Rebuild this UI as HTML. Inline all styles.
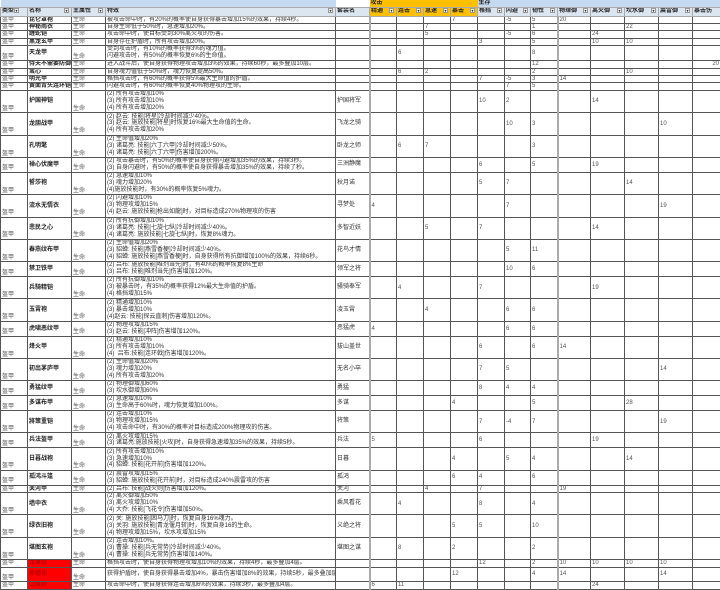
<!DOCTYPE html>
<html><head><meta charset="utf-8"><style>
*{margin:0;padding:0;box-sizing:border-box}
body{width:720px;height:590px;overflow:hidden;background:#fff;font-family:"Liberation Sans","Noto Sans CJK SC",sans-serif;font-size:6px;color:#333}
table{border-collapse:collapse;table-layout:fixed;width:720px;position:absolute;left:0;top:0}
td{border:1px solid #555;padding:0 1px;line-height:6.4px;white-space:nowrap;overflow:hidden;vertical-align:middle}
tr.h0 td{height:7px;line-height:6px;border:none;font-weight:bold;color:#222;font-size:6px}
tr.h1 td{height:9px;line-height:7px;font-weight:bold;color:#222;font-size:6px;background:#dce6f1;border-color:#aaa}
.bl{background:#c5d9f1!important}.or{background:#ffc000!important}
.dd{display:inline-block;width:5px;height:5px;border:1px solid #999;background:#fff;font-size:4px;line-height:3px;text-align:center;vertical-align:middle;margin-right:1px;color:#333}
.r1 td{height:7.45px;line-height:6.4px}.r2 td{height:14.9px}.r3 td{height:22.35px}
.r2 td.e,.r3 td.e{line-height:6.9px}
td.t,td.m{vertical-align:bottom;color:#555}
td.n{font-weight:bold;color:#222}
td.e{vertical-align:middle;color:#333}
td.red{background:#f00;color:#b00}
td.s{vertical-align:middle;color:#555}
td.g{border-left:2px solid #aaa}
</style></head><body>
<table>
<colgroup><col style="width:27px"><col style="width:44px"><col style="width:34px"><col style="width:230px"><col style="width:34px"><col style="width:27px"><col style="width:27px"><col style="width:27px"><col style="width:27px"><col style="width:27px"><col style="width:26px"><col style="width:27px"><col style="width:33px"><col style="width:34px"><col style="width:34px"><col style="width:34px"><col style="width:28px"></colgroup>
<tr class="h0"><td class="bl"></td><td class="bl"></td><td class="bl"></td><td class="bl"></td><td></td><td class="or" colspan="4">攻击</td><td class="bl" colspan="8">生存</td></tr>
<tr class="h1"><td>类型<span class="dd">▾</span></td><td>名称<span class="dd" style="float:right">▾</span></td><td>主属性<span class="dd" style="float:right">▾</span></td><td>特效<span class="dd" style="float:right">▾</span></td><td>套装名</td><td class="or">精通<span class="dd" style="float:right">▾</span></td><td class="or">连击<span class="dd" style="float:right">▾</span></td><td class="or">急速<span class="dd" style="float:right">▾</span></td><td class="or">暴击<span class="dd" style="float:right">▾</span></td><td>格挡<span class="dd" style="float:right">▾</span></td><td>闪避<span class="dd" style="float:right">▾</span></td><td>韧性<span class="dd" style="float:right">▾</span></td><td>物理御<span class="dd" style="float:right">▾</span></td><td>离火御<span class="dd" style="float:right">▾</span></td><td>坎水御<span class="dd" style="float:right">▾</span></td><td>震雷御<span class="dd" style="float:right">▾</span></td><td>暴击伤</td></tr>

<tr class="r1"><td class="t">盔甲</td><td class="n">昆仑罩袍</td><td class="m">生命</td><td class="e">被攻击命中时，有20%的概率使自身获得暴击增加15%的效果，持续4秒。</td><td></td><td class="s g"></td><td class="s"></td><td class="s"></td><td class="s">7</td><td class="s"></td><td class="s">-5</td><td class="s">5</td><td class="s g">20</td><td class="s"></td><td class="s"></td><td class="s"></td><td class="s"></td></tr>
<tr class="r1"><td class="t">盔甲</td><td class="n">神秘雨衣</td><td class="m">生命</td><td class="e">自身生命低于50%时，急速增加20%。</td><td></td><td class="s g"></td><td class="s"></td><td class="s">7</td><td class="s"></td><td class="s"></td><td class="s"></td><td class="s">1</td><td class="s g"></td><td class="s"></td><td class="s">22</td><td class="s"></td><td class="s"></td></tr>
<tr class="r1"><td class="t">盔甲</td><td class="n">缠蛇铠</td><td class="m">生命</td><td class="e">攻击命中时，使目标受到30%离火攻的伤害。</td><td></td><td class="s g"></td><td class="s"></td><td class="s">5</td><td class="s"></td><td class="s"></td><td class="s">-5</td><td class="s">6</td><td class="s g"></td><td class="s">24</td><td class="s"></td><td class="s"></td><td class="s"></td></tr>
<tr class="r1"><td class="t">盔甲</td><td class="n">黑龙玄甲</td><td class="m">生命</td><td class="e">自身存在护盾时，所有攻击增加20%。</td><td></td><td class="s g"></td><td class="s"></td><td class="s"></td><td class="s"></td><td class="s">3</td><td class="s"></td><td class="s">5</td><td class="s g"></td><td class="s">10</td><td class="s">10</td><td class="s"></td><td class="s"></td></tr>
<tr class="r2"><td class="t">盔甲</td><td class="n">天龙甲</td><td class="m">生命</td><td class="e">受到攻击时，有10%的概率获得3%的魂力值。<br>闪避攻击时，有50%的概率恢复6%的生命值。</td><td></td><td class="s g"></td><td class="s">6</td><td class="s"></td><td class="s"></td><td class="s"></td><td class="s"></td><td class="s">8</td><td class="s g"></td><td class="s"></td><td class="s"></td><td class="s"></td><td class="s"></td></tr>
<tr class="r1"><td class="t">盔甲</td><td class="n">侍夫不需要防御</td><td class="m">生命</td><td class="e">进入战斗后，使自身获得物理攻击增加3%的效果，持续60秒，最多叠加10层。</td><td></td><td class="s g"></td><td class="s"></td><td class="s"></td><td class="s"></td><td class="s"></td><td class="s"></td><td class="s">12</td><td class="s g"></td><td class="s"></td><td class="s"></td><td class="s"></td><td class="s" style="text-align:right">20</td></tr>
<tr class="r1"><td class="t">盔甲</td><td class="n">蛮心</td><td class="m">生命</td><td class="e">自身魂力值低于50%时，魂力恢复提高50%。</td><td></td><td class="s g"></td><td class="s">6</td><td class="s">2</td><td class="s"></td><td class="s"></td><td class="s"></td><td class="s">2</td><td class="s g"></td><td class="s"></td><td class="s">10</td><td class="s"></td><td class="s"></td></tr>
<tr class="r1"><td class="t">盔甲</td><td class="n">明光甲</td><td class="m">生命</td><td class="e">格挡攻击时，有60%的概率获得5%最大生命值的护盾。</td><td></td><td class="s g"></td><td class="s"></td><td class="s"></td><td class="s"></td><td class="s">7</td><td class="s">-5</td><td class="s">3</td><td class="s g">14</td><td class="s"></td><td class="s"></td><td class="s"></td><td class="s"></td></tr>
<tr class="r1"><td class="t">盔甲</td><td class="n">黄面青头连环铠</td><td class="m">生命</td><td class="e">闪避攻击时，有60%的概率恢复40%物理攻的生命。</td><td></td><td class="s g"></td><td class="s"></td><td class="s"></td><td class="s"></td><td class="s"></td><td class="s">7</td><td class="s">5</td><td class="s g"></td><td class="s"></td><td class="s"></td><td class="s"></td><td class="s"></td></tr>
<tr class="r3"><td class="t">盔甲</td><td class="n">护国神铠</td><td class="m">生命</td><td class="e">(2) 所有攻击增加10%<br>(3) 所有攻击增加10%<br>(4) 所有攻击增加20%</td><td class="e">护国将军</td><td class="s g"></td><td class="s"></td><td class="s"></td><td class="s"></td><td class="s">10</td><td class="s">2</td><td class="s"></td><td class="s g"></td><td class="s">14</td><td class="s"></td><td class="s"></td><td class="s"></td></tr>
<tr class="r3"><td class="t">盔甲</td><td class="n">龙胆战甲</td><td class="m">生命</td><td class="e">(2) 赵云: 技能[将星]冷却时间减少40%。<br>(3) 赵云: 施放技能[将星]时恢复16%最大生命值的生命。<br>(4) 所有攻击增加20%</td><td class="e">飞龙之骑</td><td class="s g"></td><td class="s"></td><td class="s"></td><td class="s"></td><td class="s"></td><td class="s">10</td><td class="s">3</td><td class="s g"></td><td class="s"></td><td class="s"></td><td class="s">10</td><td class="s"></td></tr>
<tr class="r3"><td class="t">盔甲</td><td class="n">孔明氅</td><td class="m">生命</td><td class="e">(2) 生命值增加20%<br>(3) 诸葛亮: 技能[六丁六甲]冷却时间减少50%。<br>(4) 诸葛亮: 技能[六丁六甲]伤害增加200%。</td><td class="e">卧龙之师</td><td class="s g"></td><td class="s">6</td><td class="s">7</td><td class="s"></td><td class="s"></td><td class="s"></td><td class="s">3</td><td class="s g"></td><td class="s"></td><td class="s"></td><td class="s"></td><td class="s"></td></tr>
<tr class="r2"><td class="t">盔甲</td><td class="n">禅心伏魔甲</td><td class="m">生命</td><td class="e">(2) 攻击暴击时，有50%的概率使自身获得闪避增加35%的效果，持续3秒。<br>(3) 自身闪避时，有50%的概率使自身获得暴击增加35%的效果，持续了秒。</td><td class="e">三洲静魔</td><td class="s g"></td><td class="s"></td><td class="s"></td><td class="s"></td><td class="s">6</td><td class="s"></td><td class="s">5</td><td class="s g"></td><td class="s">19</td><td class="s"></td><td class="s"></td><td class="s"></td></tr>
<tr class="r3"><td class="t">盔甲</td><td class="n">誓莎袍</td><td class="m">生命</td><td class="e">(2) 急速增加10%<br>(3) 魂力增加20%<br>(4)施放技能时，有30%的概率恢复5%魂力。</td><td class="e">秋月诺</td><td class="s g"></td><td class="s"></td><td class="s"></td><td class="s"></td><td class="s">5</td><td class="s">7</td><td class="s"></td><td class="s g"></td><td class="s"></td><td class="s">14</td><td class="s"></td><td class="s"></td></tr>
<tr class="r3"><td class="t">盔甲</td><td class="n">流水无情衣</td><td class="m">生命</td><td class="e">(2) 闪避增加10%<br>(3) 物理攻增加15%<br>(4) 赵云: 施放技能[枪出如龍]时，对目标造成270%物理攻的伤害</td><td class="e">寻梦处</td><td class="s g">4</td><td class="s"></td><td class="s"></td><td class="s"></td><td class="s"></td><td class="s">7</td><td class="s"></td><td class="s g"></td><td class="s"></td><td class="s"></td><td class="s">19</td><td class="s"></td></tr>
<tr class="r3"><td class="t">盔甲</td><td class="n">悲民之心</td><td class="m">生命</td><td class="e">(2) 所有抗御增加10%<br>(3) 诸葛亮: 技能[七旋七纵]冷却时间减少40%。<br>(4) 诸葛亮: 施放技能[七旋七纵]时，恢复8%魂力。</td><td class="e">多智近妖</td><td class="s g"></td><td class="s"></td><td class="s">5</td><td class="s"></td><td class="s">7</td><td class="s"></td><td class="s"></td><td class="s g"></td><td class="s">14</td><td class="s"></td><td class="s"></td><td class="s"></td></tr>
<tr class="r3"><td class="t">盔甲</td><td class="n">春燕纹布甲</td><td class="m">生命</td><td class="e">(2) 生命值增加20%<br>(3) 貂蝉: 技能[燕雪香梗]冷却时间减少40%。<br>(4) 貂蝉: 施放技能[燕雪香梗]时，自身获得所有抗御增加100%的效果，持续6秒。</td><td class="e">花鸟才情</td><td class="s g"></td><td class="s"></td><td class="s"></td><td class="s"></td><td class="s"></td><td class="s">5</td><td class="s">11</td><td class="s g"></td><td class="s"></td><td class="s"></td><td class="s"></td><td class="s"></td></tr>
<tr class="r2"><td class="t">盔甲</td><td class="n">禁卫铁甲</td><td class="m">生命</td><td class="e">(2) 吕布: 施放技能[唯剂当先]时，有40%的概率恢复8%生命<br>(3) 吕布: 技能[唯剂当先]伤害增加120%。</td><td class="e">领军之将</td><td class="s g"></td><td class="s"></td><td class="s"></td><td class="s"></td><td class="s"></td><td class="s">10</td><td class="s">6</td><td class="s g"></td><td class="s"></td><td class="s"></td><td class="s"></td><td class="s"></td></tr>
<tr class="r3"><td class="t">盔甲</td><td class="n">兵騎精铠</td><td class="m">生命</td><td class="e">(2) 所有抗御增加10%<br>(3) 被暴击时，有35%的概率获得12%最大生命值的护盾。<br>(4) 格挡增加15%</td><td class="e">骚骑奉军</td><td class="s g"></td><td class="s">4</td><td class="s"></td><td class="s"></td><td class="s">7</td><td class="s"></td><td class="s"></td><td class="s g"></td><td class="s">19</td><td class="s"></td><td class="s"></td><td class="s"></td></tr>
<tr class="r3"><td class="t">盔甲</td><td class="n">玉霄袍</td><td class="m">生命</td><td class="e">(2) 精通增加10%<br>(3) 暴击增加10%<br>(4)赵云: 技能[探云直刺]伤害增加120%。</td><td class="e">凌玉霄</td><td class="s g"></td><td class="s"></td><td class="s">4</td><td class="s"></td><td class="s"></td><td class="s">6</td><td class="s">6</td><td class="s g"></td><td class="s"></td><td class="s"></td><td class="s"></td><td class="s"></td></tr>
<tr class="r2"><td class="t">盔甲</td><td class="n">虎啸恶纹甲</td><td class="m">生命</td><td class="e">(2) 物理攻增加15%<br>(3) 赵云: 技能[冲阵]伤害增加120%。</td><td class="e">恶猛虎</td><td class="s g">4</td><td class="s"></td><td class="s"></td><td class="s"></td><td class="s"></td><td class="s">6</td><td class="s">6</td><td class="s g"></td><td class="s"></td><td class="s"></td><td class="s"></td><td class="s"></td></tr>
<tr class="r3"><td class="t">盔甲</td><td class="n">烽火甲</td><td class="m">生命</td><td class="e">(2) 精通增加10%<br>(3) 所有攻击增加10%<br>(4)&nbsp; 吕布:技能[连环戟]伤害增加120%。</td><td class="e">拔山盖世</td><td class="s g"></td><td class="s"></td><td class="s"></td><td class="s"></td><td class="s">6</td><td class="s"></td><td class="s">6</td><td class="s g">14</td><td class="s"></td><td class="s"></td><td class="s"></td><td class="s"></td></tr>
<tr class="r3"><td class="t">盔甲</td><td class="n">初出茅庐甲</td><td class="m">生命</td><td class="e">(2) 生命值增加20%<br>(3) 魂力增加20%<br>(4) 所有攻击增加20%</td><td class="e">无名小卒</td><td class="s g"></td><td class="s"></td><td class="s"></td><td class="s"></td><td class="s">7</td><td class="s">5</td><td class="s"></td><td class="s g"></td><td class="s"></td><td class="s"></td><td class="s">14</td><td class="s"></td></tr>
<tr class="r2"><td class="t">盔甲</td><td class="n">勇猛纹甲</td><td class="m">生命</td><td class="e">(2) 物理御增加60%<br>(3) 坎水御增加60%</td><td class="e">勇猛</td><td class="s g"></td><td class="s"></td><td class="s"></td><td class="s"></td><td class="s">8</td><td class="s">4</td><td class="s">4</td><td class="s g"></td><td class="s"></td><td class="s"></td><td class="s"></td><td class="s"></td></tr>
<tr class="r2"><td class="t">盔甲</td><td class="n">多谋布甲</td><td class="m">生命</td><td class="e">(2) 急速增加10%<br>(3) 生命高于60%时，魂力恢复增加100%。</td><td class="e">多谋</td><td class="s g"></td><td class="s"></td><td class="s"></td><td class="s">4</td><td class="s"></td><td class="s"></td><td class="s">5</td><td class="s g"></td><td class="s"></td><td class="s">28</td><td class="s"></td><td class="s"></td></tr>
<tr class="r3"><td class="t">盔甲</td><td class="n">將策重铠</td><td class="m">生命</td><td class="e">(2) 连击增加10%<br>(3) 物理攻增加15%<br>(4) 攻击命中时，有30%的概率对目标造成200%物理攻的伤害。</td><td class="e">将策</td><td class="s g"></td><td class="s"></td><td class="s"></td><td class="s"></td><td class="s">7</td><td class="s">-4</td><td class="s">7</td><td class="s g"></td><td class="s"></td><td class="s"></td><td class="s">19</td><td class="s"></td></tr>
<tr class="r2"><td class="t">盔甲</td><td class="n">兵法盔甲</td><td class="m">生命</td><td class="e">(2) 离火攻增加15%<br>(3) 诸葛亮:施放技能[火攻]时，自身获得急速增加35%的效果，持续5秒。</td><td class="e">兵法</td><td class="s g">5</td><td class="s"></td><td class="s"></td><td class="s"></td><td class="s">6</td><td class="s"></td><td class="s"></td><td class="s g"></td><td class="s">19</td><td class="s"></td><td class="s"></td><td class="s"></td></tr>
<tr class="r3"><td class="t">盔甲</td><td class="n">日暮战袍</td><td class="m">生命</td><td class="e">(2) 所有攻击增加10%<br>(3) 急速增加10%<br>(4) 貂蝉: 技能[花开前]伤害增加120%。</td><td class="e">日暮</td><td class="s g"></td><td class="s"></td><td class="s"></td><td class="s">4</td><td class="s"></td><td class="s">5</td><td class="s">4</td><td class="s g"></td><td class="s"></td><td class="s">14</td><td class="s"></td><td class="s"></td></tr>
<tr class="r2"><td class="t">盔甲</td><td class="n">孤鸿斗篷</td><td class="m">生命</td><td class="e">(2) 震雷攻增加15%<br>(3) 貂蝉: 施放技能[花开前]时，对目标造成240%震雷攻的伤害</td><td class="e">孤鸿</td><td class="s g"></td><td class="s"></td><td class="s"></td><td class="s">6</td><td class="s">4</td><td class="s"></td><td class="s">6</td><td class="s g"></td><td class="s"></td><td class="s"></td><td class="s"></td><td class="s"></td></tr>
<tr class="r1"><td class="t">盔甲</td><td class="n">关河甲</td><td class="m">生命</td><td class="e">(2) 吕布: 技能[战火则]伤害增加120%。</td><td class="e">关河</td><td class="s g"></td><td class="s"></td><td class="s">4</td><td class="s"></td><td class="s">7</td><td class="s"></td><td class="s"></td><td class="s g">19</td><td class="s"></td><td class="s"></td><td class="s"></td><td class="s"></td></tr>
<tr class="r3"><td class="t">盔甲</td><td class="n">墙中衣</td><td class="m">生命</td><td class="e">(2) 离火御增加50%<br>(3) 离火攻增加10%<br>(4) 大乔: 技能[飞花令]伤害增加50%。</td><td class="e">乘风看花</td><td class="s g"></td><td class="s">4</td><td class="s"></td><td class="s"></td><td class="s">8</td><td class="s"></td><td class="s">4</td><td class="s g"></td><td class="s"></td><td class="s"></td><td class="s"></td><td class="s"></td></tr>
<tr class="r3"><td class="t">盔甲</td><td class="n">绿衣旧袍</td><td class="m">生命</td><td class="e">(2) 关: 施放技能[困马刀]时，恢复自身16%魂力。<br>(3) 关羽: 施放技能[青龙偃月斩]时，恢复自身16的生命。<br>(4) 物理攻增加15%，坎水攻增加15%</td><td class="e">义绝之将</td><td class="s g"></td><td class="s"></td><td class="s"></td><td class="s">5</td><td class="s">5</td><td class="s"></td><td class="s">10</td><td class="s g"></td><td class="s"></td><td class="s"></td><td class="s"></td><td class="s"></td></tr>
<tr class="r3"><td class="t">盔甲</td><td class="n">堪图玄袍</td><td class="m">生命</td><td class="e">(2) 连击增加10%。<br>(3) 曹操: 技能[兵无常势]冷却时间减少40%。<br>(4) 曹操: 技能[兵无常势]伤害增加140%。</td><td class="e">堪图之谋</td><td class="s g"></td><td class="s">8</td><td class="s"></td><td class="s">2</td><td class="s"></td><td class="s"></td><td class="s">2</td><td class="s g"></td><td class="s"></td><td class="s"></td><td class="s"></td><td class="s"></td></tr>
<tr class="r1"><td class="t">盔甲</td><td class="n red">龙果铠</td><td class="m">生命</td><td class="e">格挡攻击时，使自身获得物理攻增加10%的效果，持续4秒，最多叠加4层。</td><td></td><td class="s g"></td><td class="s"></td><td class="s"></td><td class="s"></td><td class="s">12</td><td class="s"></td><td class="s">2</td><td class="s g">10</td><td class="s">10</td><td class="s">10</td><td class="s">10</td><td class="s"></td></tr>
<tr class="r2"><td class="t">盔甲</td><td class="n red">赤德袍</td><td class="m">生命</td><td class="e">获得护盾时，使自身获得暴击增加4%，暴击伤害增加8%的效果，持续5秒，最多叠加层</td><td></td><td class="s g"></td><td class="s"></td><td class="s"></td><td class="s">12</td><td class="s"></td><td class="s"></td><td class="s">4</td><td class="s g">14</td><td class="s"></td><td class="s"></td><td class="s">14</td><td class="s"></td></tr>
<tr class="r1"><td class="t">盔甲</td><td class="n red">山鹰袍</td><td class="m">生命</td><td class="e">攻击命中时，使自身获得连击增加6%的效果，持续3秒，最多叠加4层。</td><td></td><td class="s g">6</td><td class="s">11</td><td class="s"></td><td class="s"></td><td class="s"></td><td class="s"></td><td class="s"></td><td class="s g"></td><td class="s">24</td><td class="s"></td><td class="s"></td><td class="s"></td></tr>
</table>
</body></html>
